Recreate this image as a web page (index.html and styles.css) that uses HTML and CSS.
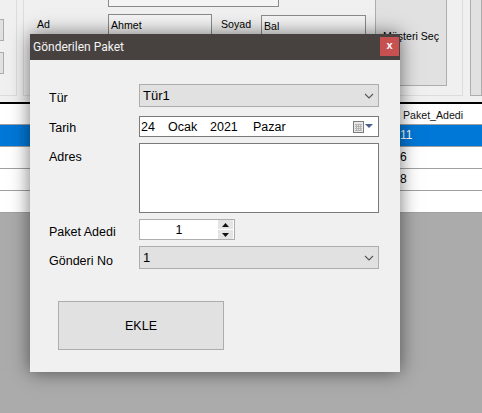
FILE: index.html
```html
<!DOCTYPE html>
<html lang="tr">
<head>
    <meta charset="UTF-8">
    <meta name="viewport" content="width=device-width, initial-scale=1.0">
    <title>Gönderilen Paket</title>
    <link rel="stylesheet" href="styles.css">
</head>
<body>
    <!-- Ana form, dialogun arkasinda -->
    <div class="app">
        <div class="top">
            <div class="side-panel">
                <div class="side-box"></div>
                <div class="side-box"></div>
            </div>
            <div class="group">
                <div class="group-fields">
                    <div class="group-row">
                        <span class="group-label">TC Kimlik No</span>
                        <div class="group-input wide">1234567810</div>
                    </div>
                    <div class="group-row">
                        <span class="group-label">Ad</span>
                        <div class="group-input">Ahmet</div>
                        <span class="group-label short">Soyad</span>
                        <div class="group-input surname">Bal</div>
                    </div>
                </div>
                <div class="select-btn">Müşteri Seç</div>
            </div>
            <div class="right-panel"></div>
        </div>
        <div class="table">
            <div class="table-row header"><span>Paket_Adedi</span></div>
            <div class="table-row value selected"><span>11</span></div>
            <div class="table-row value"><span>6</span></div>
            <div class="table-row value"><span>8</span></div>
            <div class="table-row"></div>
        </div>
    </div>

    <!-- Dialog -->
    <div class="dialog">
        <div class="title-bar">
            <span class="title">Gönderilen Paket</span>
            <div class="close">x</div>
        </div>
        <div class="dialog-body">
            <div class="form">
                <div class="label low">Tür</div>
                <div class="combo">
                    <span>Tür1</span>
                    <svg class="chevron" width="10" height="6" viewBox="0 0 10 6"><path d="M1 1l4 4 4-4" fill="none" stroke="#555" stroke-width="1.1"/></svg>
                </div>

                <div class="label high">Tarih</div>
                <div class="date">
                    <span class="d-day">24</span>
                    <span class="d-month">Ocak</span>
                    <span class="d-year">2021</span>
                    <span>Pazar</span>
                    <svg class="cal" width="21" height="14" viewBox="0 0 21 14">
                        <rect x="1.500" y="1.500" width="10" height="11" fill="#e8e8e8" stroke="#7c7c7c"/>
                        <path d="M3 4.500h7M3 6.500h7M3 8.500h7M3 10.500h7M4.500 4v7M6.500 4v7M8.500 4v7" stroke="#b4b4b4" stroke-width="1"/>
                        <path d="M13 4h8l-4 4z" fill="#4a5f8a"/>
                    </svg>
                </div>

                <div class="label low">Adres</div>
                <div class="address"></div>

                <div class="label">Paket Adedi</div>
                <div class="numeric">
                    <span class="num-value">1</span>
                    <div class="spinner">
                        <div class="spin"><svg width="7" height="4" viewBox="0 0 7 4"><path d="M3.500 0l3.500 4h-7z" fill="#111"/></svg></div>
                        <div class="spin"><svg width="7" height="4" viewBox="0 0 7 4"><path d="M0 0h7l-3.500 4z" fill="#111"/></svg></div>
                    </div>
                </div>

                <div class="label lower">Gönderi No</div>
                <div class="combo">
                    <span>1</span>
                    <svg class="chevron" width="10" height="6" viewBox="0 0 10 6"><path d="M1 1l4 4 4-4" fill="none" stroke="#555" stroke-width="1.1"/></svg>
                </div>
            </div>
            <div class="add-btn">EKLE</div>
        </div>
    </div>
</body>
</html>
```

FILE: styles.css
```css
html, body {
    margin: 0;
    padding: 0;
    overflow: hidden;
}
body {
    width: 482px;
    height: 413px;
    background-color: #ababab;
    font-family: "Liberation Sans", Arial, sans-serif;
    font-size: 10.600px;
    color: #000;
    position: relative;
}

/* Arka plandaki form */
.top {
    display: flex;
    height: 102px;
    box-sizing: border-box;
    background-color: #f0f0f0;
    overflow: hidden;
}
.side-panel {
    width: 17px;
    height: 96px;
    box-sizing: border-box;
    border-right: 1px solid #dcdcdc;
    border-bottom: 1px solid #dcdcdc;
    padding-top: 19px;
    flex-shrink: 0;
}
.side-box {
    width: 3px;
    height: 20px;
    border: 1px solid #adadad;
    border-left: none;
    background-color: #e1e1e1;
    margin-bottom: 11px;
}
.group {
    margin-left: 6px;
    width: 440px;
    height: 96px;
    box-sizing: border-box;
    border: 1px solid #dcdcdc;
    border-top: none;
    display: flex;
    flex-shrink: 0;
}
.group-fields {
    width: 351px;
    margin-top: -16px;
}
.group-row {
    display: flex;
    align-items: flex-start;
    height: 23px;
    margin-bottom: 7px;
}
.group-label {
    width: 70px;
    padding-left: 13px;
    padding-right: 1px;
    line-height: 21px;
    flex-shrink: 0;
}
.group-label.short {
    width: 40px;
    padding-left: 9px;
    padding-right: 0;
}
.group-input {
    width: 100px;
    height: 21px;
    line-height: 20px;
    border: 1px solid #8a8a8a;
    background-color: #f4f4f4;
    padding-left: 2px;
}
.group-input.wide {
    width: 167px;
}
.group-input.surname {
    width: 101px;
    margin-top: 1px;
}
.select-btn {
    width: 72px;
    height: 102px;
    margin-top: -16px;
    padding-top: 1px;
    box-sizing: border-box;
    border: 1px solid #adadad;
    background-color: #e1e1e1;
    display: flex;
    align-items: center;
    justify-content: center;
}
.right-panel {
    margin-left: 7px;
    width: 30px;
    height: 96px;
    box-sizing: border-box;
    border: 1px solid #adadad;
    border-top: none;
    background-color: #e1e1e1;
}
.table {
    border-top: 2px solid #000;
    background-color: #fff;
    border-bottom: 1px solid #a0a0a0;
}
.table-row {
    height: 21px;
    line-height: 21px;
    border-bottom: 1px solid #a0a0a0;
    padding-left: 403px;
}
.table-row:last-child {
    border-bottom: none;
}
.table-row.value {
    padding-left: 400px;
    font-size: 12px;
}
.header {
    height: 20px;
    line-height: 22px;
    color: #111;
}
.selected {
    background-color: #0078d7;
    color: #fff;
}

/* Dialog */
.dialog {
    position: absolute;
    left: 30px;
    top: 34px;
    width: 370px;
    height: 338px;
    background-color: #f0f0f0;
    box-shadow: 0 0 18px rgba(0, 0, 0, 0.55);
}
.title-bar {
    height: 26px;
    background-color: #474240;
    color: #f4f4f4;
    display: flex;
    align-items: center;
    padding-left: 3px;
    position: relative;
}
.title {
    font-family: Roboto, sans-serif;
    font-size: 12px;
}
.close {
    position: absolute;
    right: 1px;
    top: 3px;
    width: 19px;
    height: 19px;
    line-height: 17px;
    background-color: #c75050;
    color: #fff;
    font-weight: bold;
    font-size: 11px;
    text-align: center;
}
.dialog-body {
    padding: 24px 21px 0 19px;
}
.form {
    display: grid;
    grid-template-columns: 90px 240px;
    grid-template-rows: 26px 21px 70px 21px 23px;
    row-gap: 6px;
}
.label {
    font-size: 12.500px;
    padding-top: 6px;
    line-height: 14px;
}
.label.high {
    padding-top: 5px;
}
.label.low {
    padding-top: 7px;
}
.label.lower {
    padding-top: 8px;
}
.combo {
    height: 23px;
    box-sizing: border-box;
    background-color: #e1e1e1;
    border: 1px solid #adadad;
    display: flex;
    align-items: center;
    justify-content: space-between;
    padding: 0 4px 0 3px;
    font-size: 13px;
}
.chevron {
    display: block;
}
.date {
    box-sizing: border-box;
    background-color: #fff;
    border: 1px solid #7a7a7a;
    display: flex;
    align-items: center;
    padding-left: 1px;
    font-size: 12.500px;
}
.d-day {
    width: 27px;
}
.d-month {
    width: 42px;
}
.d-year {
    width: 43px;
}
.cal {
    margin-left: auto;
    margin-right: 5px;
}
.address {
    box-sizing: border-box;
    background-color: #fff;
    border: 1px solid #7a7a7a;
}
.numeric {
    box-sizing: border-box;
    width: 96px;
    background-color: #fff;
    border: 1px solid #adadad;
    display: flex;
    align-items: center;
}
.num-value {
    flex: 1;
    text-align: center;
    font-size: 12.500px;
}
.spinner {
    width: 15px;
    height: 19px;
    margin-right: 1px;
    display: flex;
    flex-direction: column;
    gap: 1px;
}
.spin {
    flex: 1;
    background-color: #e4e4e4;
    display: flex;
    align-items: center;
    justify-content: center;
}
.add-btn {
    margin: 32px 0 0 9px;
    width: 166px;
    height: 49px;
    box-sizing: border-box;
    background-color: #e1e1e1;
    border: 1px solid #adadad;
    display: flex;
    align-items: center;
    justify-content: center;
    font-size: 12.500px;
}
```
